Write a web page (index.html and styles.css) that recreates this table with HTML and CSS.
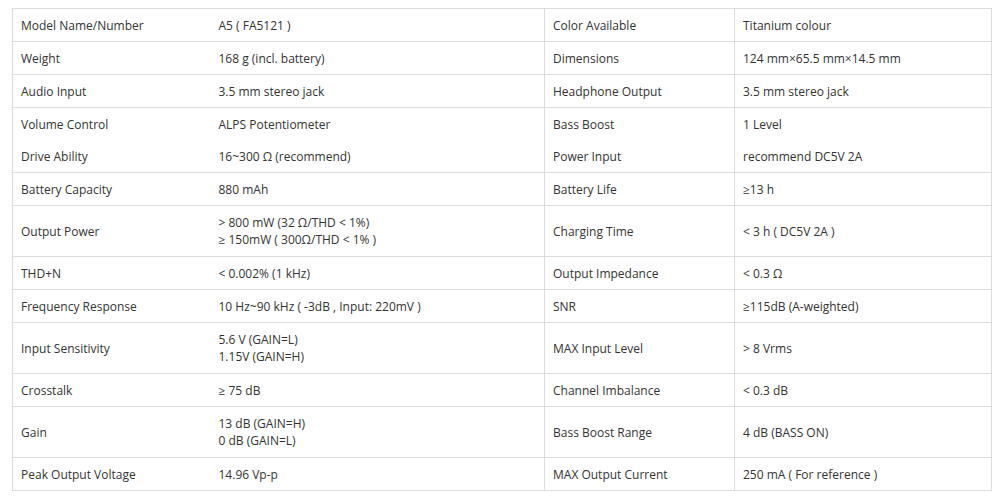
FILE: index.html
```html
<!DOCTYPE html>
<html lang="en">
<head>
<meta charset="utf-8">
<title>Specifications</title>
<link rel="stylesheet" href="styles.css">
</head>
<body>
<div class="page">
<table class="spec">
  <colgroup>
    <col class="c1"><col class="c2"><col class="c3"><col class="c4">
  </colgroup>
  <tbody>
    <tr><td>Model Name/Number</td><td class="v">A5 ( FA5121 )</td><td class="k">Color Available</td><td class="k">Titanium colour</td></tr>
    <tr><td>Weight</td><td class="v">168 g (incl. battery)</td><td class="k">Dimensions</td><td class="k">124 mm×65.5 mm×14.5 mm</td></tr>
    <tr><td>Audio Input</td><td class="v">3.5 mm stereo jack</td><td class="k">Headphone Output</td><td class="k">3.5 mm stereo jack</td></tr>
    <tr class="noline"><td>Volume Control</td><td class="v">ALPS Potentiometer</td><td class="k">Bass Boost</td><td class="k">1 Level</td></tr>
    <tr><td>Drive Ability</td><td class="v">16~300 Ω (recommend)</td><td class="k">Power Input</td><td class="k">recommend DC5V 2A</td></tr>
    <tr><td>Battery Capacity</td><td class="v">880 mAh</td><td class="k">Battery Life</td><td class="k">≥13 h</td></tr>
    <tr class="two"><td>Output Power</td><td class="v">&gt; 800 mW (32 Ω/THD &lt; 1%)<br>≥ 150mW ( 300Ω/THD &lt; 1% )</td><td class="k">Charging Time</td><td class="k">&lt; 3 h ( DC5V 2A )</td></tr>
    <tr><td>THD+N</td><td class="v">&lt; 0.002% (1 kHz)</td><td class="k">Output Impedance</td><td class="k">&lt; 0.3 Ω</td></tr>
    <tr><td>Frequency Response</td><td class="v">10 Hz~90 kHz ( -3dB , Input: 220mV )</td><td class="k">SNR</td><td class="k">≥115dB (A-weighted)</td></tr>
    <tr class="two"><td>Input Sensitivity</td><td class="v">5.6 V (GAIN=L)<br>1.15V (GAIN=H)</td><td class="k">MAX Input Level</td><td class="k">&gt; 8 Vrms</td></tr>
    <tr><td>Crosstalk</td><td class="v">≥ 75 dB</td><td class="k">Channel Imbalance</td><td class="k">&lt; 0.3 dB</td></tr>
    <tr class="two"><td>Gain</td><td class="v">13 dB (GAIN=H)<br>0 dB (GAIN=L)</td><td class="k">Bass Boost Range</td><td class="k">4 dB (BASS ON)</td></tr>
    <tr><td>Peak Output Voltage</td><td class="v">14.96 Vp-p</td><td class="k">MAX Output Current</td><td class="k">250 mA ( For reference )</td></tr>
  </tbody>
</table>
</div>
</body>
</html>
```

FILE: styles.css
```css
html, body {
  margin: 0;
  padding: 0;
  background: #ffffff;
}
.page {
  padding: 8px 10px 0 12px;
}
.spec {
  width: 979px;
  border-collapse: collapse;
  table-layout: fixed;
  font-family: "Open Sans", "Noto Sans", sans-serif;
  font-size: 12px;
  line-height: 17px;
  color: #333333;
  border: 1px solid #dcdcdc;
}
.c1 { width: 198px; }
.c2 { width: 334px; }
.c3 { width: 190px; }
.c4 { width: 257px; }
.spec td {
  padding: 8px 8px 7px 8px;
  border-top: 1px solid #dcdcdc;
  border-bottom: 1px solid #dcdcdc;
  vertical-align: middle;
  white-space: nowrap;
}
.spec tr.two td {
  padding-bottom: 8px;
}
.spec td.k {
  border-left: 1px solid #dcdcdc;
}
.spec tr.noline td {
  border-bottom: none;
}
.spec tr.noline + tr td {
  border-top: none;
}
```
